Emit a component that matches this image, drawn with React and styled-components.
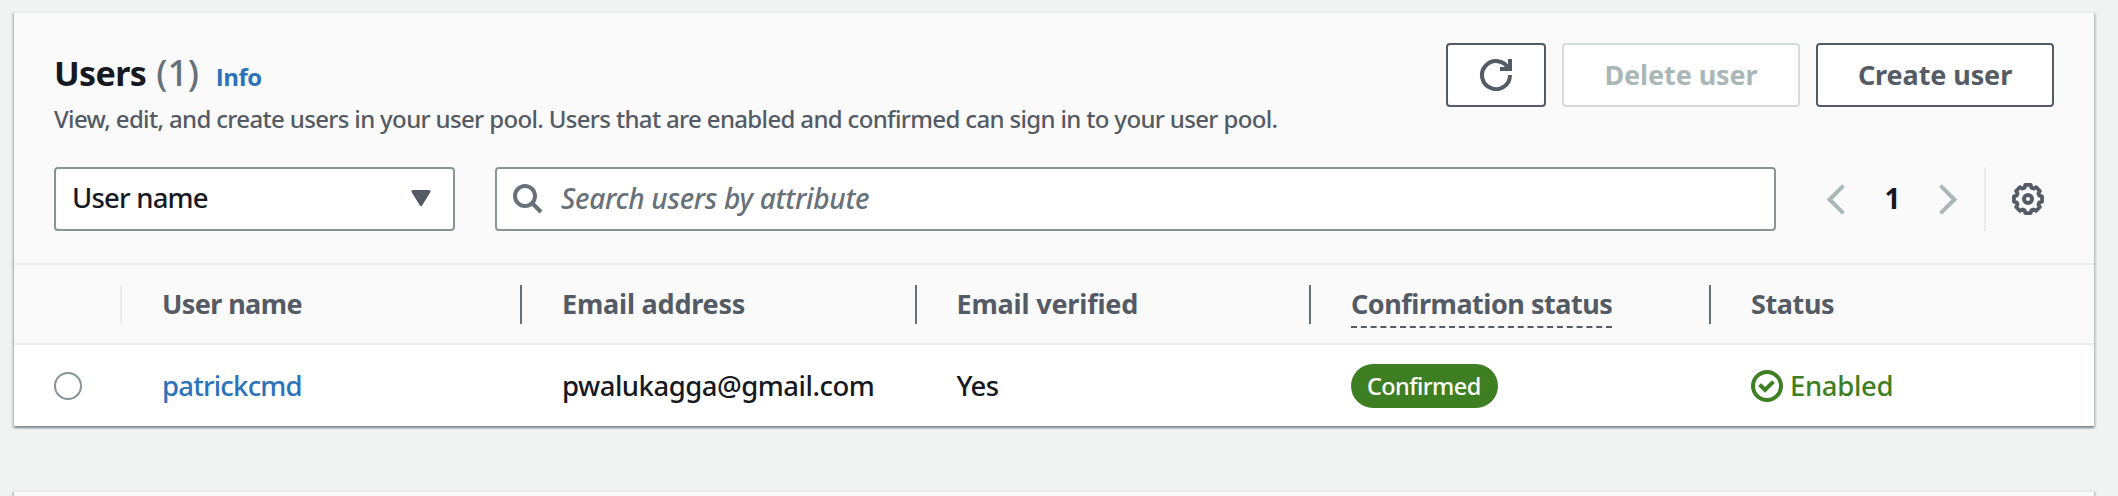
import React from "react";
import styled, { createGlobalStyle } from "styled-components";

const GlobalStyle = createGlobalStyle`
  * { box-sizing: border-box; }
  body {
    margin: 0;
    background: #f1f3f3;
    color: #16191f;
    font-family: "Noto Sans", "Open Sans", sans-serif;
    font-size: 27.5px;
    font-weight: 500;
  }
`;

const Page = styled.main`
  height: 496px;
  padding: 11px 24px 0 14px;
  overflow: hidden;
`;

const Card = styled.section`
  width: 2080px;
  margin-bottom: 64px;
  border-top: 2px solid #eaeded;
  background: #fff;
  box-shadow: 0 2px 2px 0 rgba(0, 28, 36, 0.3), 2px 2px 2px 0 rgba(0, 28, 36, 0.15),
    -2px 2px 2px 0 rgba(0, 28, 36, 0.15);
`;

const NextCard = styled(Card)`
  height: 120px;
  background: #fafafa;
`;

const CardHeader = styled.header`
  padding: 30px 40px 32px;
  background: #fafafa;
  border-bottom: 2px solid #eaeded;
`;

const HeadingRow = styled.div`
  display: flex;
  justify-content: space-between;
  align-items: flex-start;
  height: 124px;
`;

const TitleLine = styled.div`
  display: flex;
  align-items: baseline;
  height: 50px;
  margin-top: 8px;
  line-height: 44px;
`;

const Title = styled.h2`
  margin: 0;
  font-size: 34px;
  font-weight: 700;
  letter-spacing: -0.6px;
`;

const Counter = styled.span`
  margin-left: 10px;
  font-size: 36px;
  letter-spacing: -0.2px;
  color: #687078;
`;

const InfoLink = styled.a`
  margin-left: 17px;
  font-family: "Open Sans", sans-serif;
  font-size: 24px;
  font-weight: 700;
  letter-spacing: -0.5px;
  color: #2b72b8;
`;

const Description = styled.p`
  margin: 0;
  font-size: 24px;
  line-height: 36px;
  letter-spacing: -0.66px;
  color: #545b64;
`;

const Actions = styled.div`
  display: flex;
  gap: 16px;
`;

const Button = styled.button`
  display: flex;
  align-items: center;
  justify-content: center;
  width: ${(p) => (p.$icon ? "100px" : "238px")};
  height: 64px;
  padding: 0 0 1px;
  border: 2px solid ${(p) => (p.disabled ? "#d5dbdb" : "#545b64")};
  border-radius: 4px;
  background: #fff;
  color: ${(p) => (p.disabled ? "#aab7b8" : "#545b64")};
  font: 700 27px "Noto Sans", sans-serif;
  letter-spacing: -0.1px;
`;

const Toolbar = styled.div`
  display: flex;
  align-items: center;
  height: 64px;
`;

const Field = styled.div`
  display: flex;
  align-items: center;
  height: 64px;
  border: 2px solid #879596;
  border-radius: 4px;
  background: #fff;
  line-height: 36px;
`;

const Select = styled(Field)`
  justify-content: space-between;
  width: 401px;
  margin-right: 40px;
  padding: 0 22px 2px 16px;
  letter-spacing: -0.8px;
`;

const Search = styled(Field)`
  width: 1281px;
  padding: 0 16px;
`;

const Placeholder = styled.span`
  margin-left: 18px;
  padding-bottom: 2px;
  font-size: 28px;
  font-style: italic;
  letter-spacing: -0.28px;
  color: #687078;
`;

const Pagination = styled.nav`
  display: flex;
  align-items: center;
  justify-content: space-between;
  width: 130px;
  margin-left: 51px;
`;

const PageNumber = styled.span`
  padding: 0 0 2px 1px;
  font-size: 28px;
  font-weight: 700;
  line-height: 36px;
`;

const Preferences = styled.div`
  display: flex;
  align-items: center;
  height: 64px;
  margin-left: 27px;
  padding-left: 26px;
  border-left: 2px solid #eaeded;
`;

const Row = styled.div`
  display: grid;
  grid-template-columns: 108px 400px 394.5px 394.5px 400px 1fr;
`;

const HeadRow = styled(Row)`
  height: 80px;
  padding-top: 20px;
  background: #fafafa;
  border-bottom: 2px solid #eaeded;
`;

const HeadCell = styled.div`
  height: 39px;
  padding-left: 40px;
  border-right: ${(p) => (p.$line ? `2px solid ${p.$line}` : "none")};
  font-size: 27px;
  font-weight: 700;
  line-height: 38px;
  letter-spacing: ${(p) => p.$track || 0}px;
  white-space: nowrap;
  color: #545b64;
`;

const DashedLabel = styled.span`
  display: inline-block;
  height: 42px;
  line-height: 36px;
  border-bottom: 2px dashed #545b64;
`;

const BodyRow = styled(Row)`
  height: 81px;
  align-items: center;
`;

const Cell = styled.div`
  display: flex;
  align-items: center;
  padding-left: 40px;
  line-height: 36px;
  letter-spacing: ${(p) => p.$track || 0}px;
`;

const Radio = styled.span`
  width: 28px;
  height: 28px;
  border: 2px solid #879596;
  border-radius: 50%;
`;

const UserLink = styled.a`
  color: #2b72b8;
`;

const Badge = styled.span`
  height: 44px;
  padding: 0 17px 0 16px;
  border-radius: 22px;
  background: #3f7f23;
  color: #fff;
  font-size: 23.5px;
  line-height: 44px;
`;

const Status = styled.span`
  display: flex;
  align-items: center;
  gap: 7px;
  color: #3f7f23;
`;

const RefreshIcon = () => (
  <svg width="32" height="32" viewBox="0 0 16 16" fill="none" stroke="#545b64" strokeWidth="2">
    <path d="M10 5h5V0" />
    <path d="M15 8a7 7 0 1 1-.7-3" />
  </svg>
);

const CaretIcon = () => (
  <svg width="20" height="16" viewBox="0 0 20 16">
    <path d="M2 1.5h16L10 14.5z" fill="#545b64" stroke="#545b64" strokeWidth="3" strokeLinejoin="round" />
  </svg>
);

const SearchIcon = () => (
  <svg width="30" height="30" viewBox="0 0 30 30" fill="none" stroke="#687078" strokeWidth="4">
    <circle cx="12" cy="12" r="10" />
    <path d="M19 19l9 9" />
  </svg>
);

const Chevron = ({ right }) => (
  <svg width="18" height="31" viewBox="0 0 18 31" fill="none" stroke="#aab7b8" strokeWidth="4">
    <path d={right ? "M1.5 1.7L15.3 15.5 1.5 29.3" : "M16.5 1.7L2.7 15.5 16.5 29.3"} />
  </svg>
);

const gearOutline = (() => {
  const points = [];
  for (let i = 0; i < 8; i += 1) {
    [[-11, 14.3], [11, 14.3], [17, 11.8], [28, 11.8]].forEach(([offset, radius]) => {
      const angle = ((i * 45 + offset) * Math.PI) / 180;
      points.push(`${(16 + radius * Math.cos(angle)).toFixed(2)} ${(16 + radius * Math.sin(angle)).toFixed(2)}`);
    });
  }
  return `M${points.join("L")}z`;
})();

const GearIcon = () => (
  <svg width="32" height="32" viewBox="0 0 32 32" fill="none" stroke="#545b64">
    <path d={gearOutline} strokeWidth="3.8" strokeLinejoin="round" />
    <circle cx="16" cy="16" r="4" strokeWidth="4" />
  </svg>
);

const CheckIcon = () => (
  <svg width="32" height="32" viewBox="0 0 32 32" fill="none" stroke="#3f7f23" strokeWidth="4">
    <circle cx="16" cy="16" r="14" />
    <path d="M10 16l4 4 7-7" strokeLinecap="square" />
  </svg>
);

export default function App() {
  return (
    <>
      <GlobalStyle />
      <Page>
        <Card>
          <CardHeader>
            <HeadingRow>
              <div>
                <TitleLine>
                  <Title>Users</Title>
                  <Counter>(1)</Counter>
                  <InfoLink>Info</InfoLink>
                </TitleLine>
                <Description>
                  View, edit, and create users in your user pool. Users that are enabled and
                  confirmed can sign in to your user pool.
                </Description>
              </div>
              <Actions>
                <Button $icon aria-label="Refresh">
                  <RefreshIcon />
                </Button>
                <Button disabled>Delete user</Button>
                <Button>Create user</Button>
              </Actions>
            </HeadingRow>
            <Toolbar>
              <Select>
                User name
                <CaretIcon />
              </Select>
              <Search>
                <SearchIcon />
                <Placeholder>Search users by attribute</Placeholder>
              </Search>
              <Pagination>
                <Chevron />
                <PageNumber>1</PageNumber>
                <Chevron right />
              </Pagination>
              <Preferences>
                <GearIcon />
              </Preferences>
            </Toolbar>
          </CardHeader>
          <HeadRow>
            <HeadCell $line="#eaeded" />
            <HeadCell $line="#687078" $track={-0.6}>User name</HeadCell>
            <HeadCell $line="#687078" $track={-0.2}>Email address</HeadCell>
            <HeadCell $line="#687078" $track={-0.18}>Email verified</HeadCell>
            <HeadCell $line="#687078" $track={-0.47}>
              <DashedLabel>Confirmation status</DashedLabel>
            </HeadCell>
            <HeadCell $track={-0.4}>Status</HeadCell>
          </HeadRow>
          <BodyRow>
            <Cell>
              <Radio />
            </Cell>
            <Cell $track={-0.8}>
              <UserLink>patrickcmd</UserLink>
            </Cell>
            <Cell $track={-0.5}>pwalukagga@gmail.com</Cell>
            <Cell $track={-0.6}>Yes</Cell>
            <Cell $track={-0.6}>
              <Badge>Confirmed</Badge>
            </Cell>
            <Cell $track={-0.35}>
              <Status>
                <CheckIcon />
                Enabled
              </Status>
            </Cell>
          </BodyRow>
        </Card>
        <NextCard />
      </Page>
    </>
  );
}
